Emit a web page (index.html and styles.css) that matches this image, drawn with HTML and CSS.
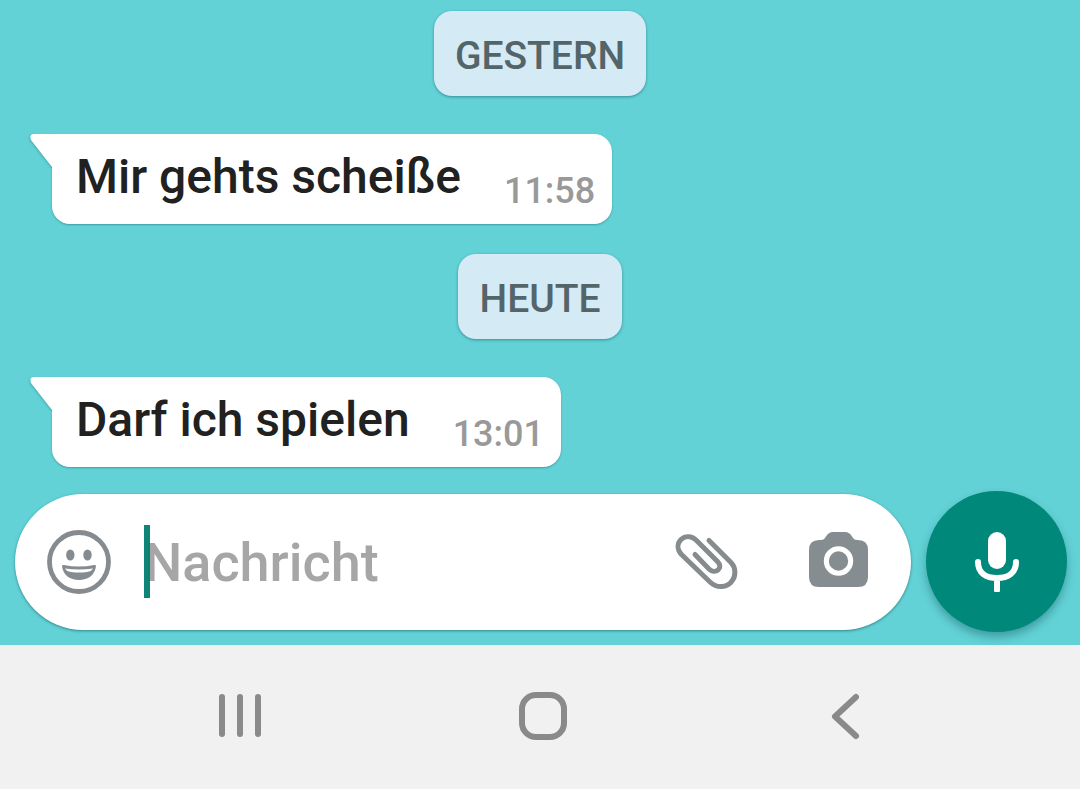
FILE: index.html
```html
<!DOCTYPE html>
<html lang="de">
<head>
<meta charset="utf-8">
<meta name="viewport" content="width=device-width, initial-scale=1">
<title>Chat</title>
<link rel="stylesheet" href="styles.css">
</head>
<body>
<main class="chat">
  <section class="messages">
    <h2 class="day">GESTERN</h2>
    <article class="bubble">
      <svg class="tail" viewBox="0 0 24 36" aria-hidden="true"><path d="M3 0H24V36L22 33L1 6Q-1 1 3 0Z"/></svg>
      <p class="text">Mir gehts scheiße</p>
      <time class="time">11:58</time>
    </article>
    <h2 class="day">HEUTE</h2>
    <article class="bubble">
      <svg class="tail" viewBox="0 0 24 36" aria-hidden="true"><path d="M3 0H24V36L22 33L1 6Q-1 1 3 0Z"/></svg>
      <p class="text">Darf ich spielen</p>
      <time class="time">13:01</time>
    </article>
  </section>
  <form class="composer">
    <div class="field">
      <button class="icon" type="button" aria-label="Emoji">
        <svg width="64" height="64" viewBox="0 0 64 64"><circle cx="32" cy="32" r="29.500" fill="none" stroke="#868b90" stroke-width="4.800"/><ellipse cx="23.300" cy="25" rx="4.200" ry="5.500"/><ellipse cx="40.500" cy="25" rx="4.200" ry="5.500"/><path fill-rule="evenodd" d="M15 36Q15 34.500 17 35Q32 38 47 35Q49 34.500 49 36C48 45 41 50 32 50S16 45 15 36ZM18 38.500Q19.500 41.500 24 42Q32 43 40 42Q44.500 41.500 46 38.500Q32 40.500 18 38.500Z"/></svg>
      </button>
      <div class="entry">
        <input class="input" type="text" placeholder="Nachricht" aria-label="Nachricht">
        <span class="caret"></span>
      </div>
      <button class="icon" type="button" aria-label="Anhängen">
        <svg width="64" height="56" viewBox="15 14 64 56"><path fill="none" stroke="#868b8e" stroke-width="5" stroke-linecap="round" stroke-linejoin="round" d="M49 20.500L71 42.500C76 47.500 76 56 72 61C67 68 57 68.500 50 62L21.500 34.500C17 29.500 17 23.500 21 19.500C25.500 15.500 31.500 16 36 20L57.500 41.500C60.500 44.500 60.500 48 58 50C55.500 52 51.500 51.500 49 49L35 34.500"/></svg>
      </button>
      <button class="icon" type="button" aria-label="Kamera">
        <svg width="60" height="60" viewBox="0 0 60 60"><path fill="#868d90" d="M10 8H12Q15 8 17 4.500Q19.500 0 24 0H36Q40.500 0 43 4.500Q45 8 48 8H49Q59 8 59 18V45Q59 55 49 55H10Q0 55 0 45V18Q0 8 10 8Z"/><circle cx="29.500" cy="29" r="12.200" fill="none" stroke="#fff" stroke-width="5"/></svg>
      </button>
    </div>
    <button class="mic" type="button" aria-label="Sprachnachricht">
      <svg width="46" height="60" viewBox="0 0 46 60"><rect x="14" y="0" width="18" height="37" rx="9" fill="#fff"/><path d="M4 30C4 41 12 46 23 46S42 41 42 30M23 46V58" fill="none" stroke="#fff" stroke-width="6" stroke-linecap="round"/></svg>
    </button>
  </form>
</main>
<nav class="nav">
  <button class="key" type="button" aria-label="Letzte Apps"><svg width="48" height="48" viewBox="0 0 48 48"><path d="M5 5V42M23 5V42M41 5V42"/></svg></button>
  <button class="key" type="button" aria-label="Startseite"><svg width="48" height="48" viewBox="0 0 48 48"><rect x="3" y="3" width="42" height="42" rx="14"/></svg></button>
  <button class="key" type="button" aria-label="Zurück"><svg width="48" height="48" viewBox="0 0 48 48"><path d="M35 5L14 24.500L35 44"/></svg></button>
</nav>
</body>
</html>
```
FILE: styles.css
```css
* { box-sizing: border-box; }

body {
  margin: 0;
  min-height: 100vh;
  display: flex;
  flex-direction: column;
  background: #f1f1f1;
  font-family: Roboto, sans-serif;
  font-weight: 500;
}

button {
  display: flex;
  align-items: center;
  justify-content: center;
  flex: none;
  padding: 0;
  border: 0;
  background: none;
}

svg { display: block; }

.chat {
  background: #62d2d6;
  padding: 11px 13px 13px 15px;
}

.messages {
  display: flex;
  flex-direction: column;
  align-items: flex-start;
  padding-right: 2px;
}

.day {
  align-self: center;
  margin: 0;
  padding: 23px 21px 17px;
  border-radius: 18px;
  background: #d4eaf4;
  box-shadow: 0 1px 3px rgba(0, 60, 70, 0.45);
  color: #54656a;
  font-size: 39px;
  font-weight: 500;
  line-height: 45px;
}

.bubble {
  position: relative;
  display: flex;
  align-items: flex-end;
  gap: 43px;
  height: 90px;
  margin: 38px 0 30px 37px;
  padding: 0 17px 0 24px;
  border-radius: 0 18px 18px 18px;
  background: #fff;
  box-shadow: 0 1px 2px rgba(0, 60, 70, 0.35);
}

.bubble:last-child { margin-bottom: 24px; }

.tail {
  position: absolute;
  top: 0;
  left: -22px;
  width: 24px;
  height: 36px;
  fill: #fff;
  filter: drop-shadow(-1px 1px 1px rgba(0, 60, 70, 0.2));
  clip-path: inset(-2px 1px 2px -4px);
}

.text {
  margin: 0;
  padding-bottom: 19px;
  color: #212121;
  font-size: 48px;
  line-height: 56px;
}

.time {
  padding-bottom: 12px;
  color: #999;
  font-size: 36px;
  line-height: 42px;
}

.composer {
  display: flex;
  align-items: center;
  gap: 15px;
}

.field {
  flex: 1;
  min-width: 0;
  display: flex;
  align-items: center;
  height: 136px;
  padding: 0 42px 0 32px;
  border-radius: 68px;
  background: #fff;
  box-shadow: 0 1px 3px rgba(0, 60, 70, 0.5);
}

.icon { fill: #868b90; }

.icon + .icon { margin-left: 70px; }

.entry {
  position: relative;
  flex: 1;
  min-width: 0;
  margin-left: 33px;
}

.input {
  display: block;
  width: 100%;
  height: 73px;
  padding: 2px 0 0;
  border: 0;
  outline: 0;
  background: none;
  color: #212121;
  font: 500 54px/70px Roboto, sans-serif;
}

.input::placeholder { color: #a6a6a6; opacity: 1; }

.caret {
  position: absolute;
  top: 0;
  left: 0;
  width: 6px;
  height: 73px;
  background: rgba(0, 128, 112, 0.95);
}

.mic {
  width: 141px;
  height: 141px;
  border-radius: 50%;
  background: #00897a;
  box-shadow: 0 5px 8px rgba(0, 60, 70, 0.35);
}

.nav {
  flex: 1;
  min-height: 144px;
  display: flex;
  align-items: center;
  justify-content: center;
  gap: 254px;
  padding: 0 0 2px 6px;
}

.key svg {
  fill: none;
  stroke: #8a8a8a;
  stroke-width: 6px;
  stroke-linecap: round;
  stroke-linejoin: round;
}
```
